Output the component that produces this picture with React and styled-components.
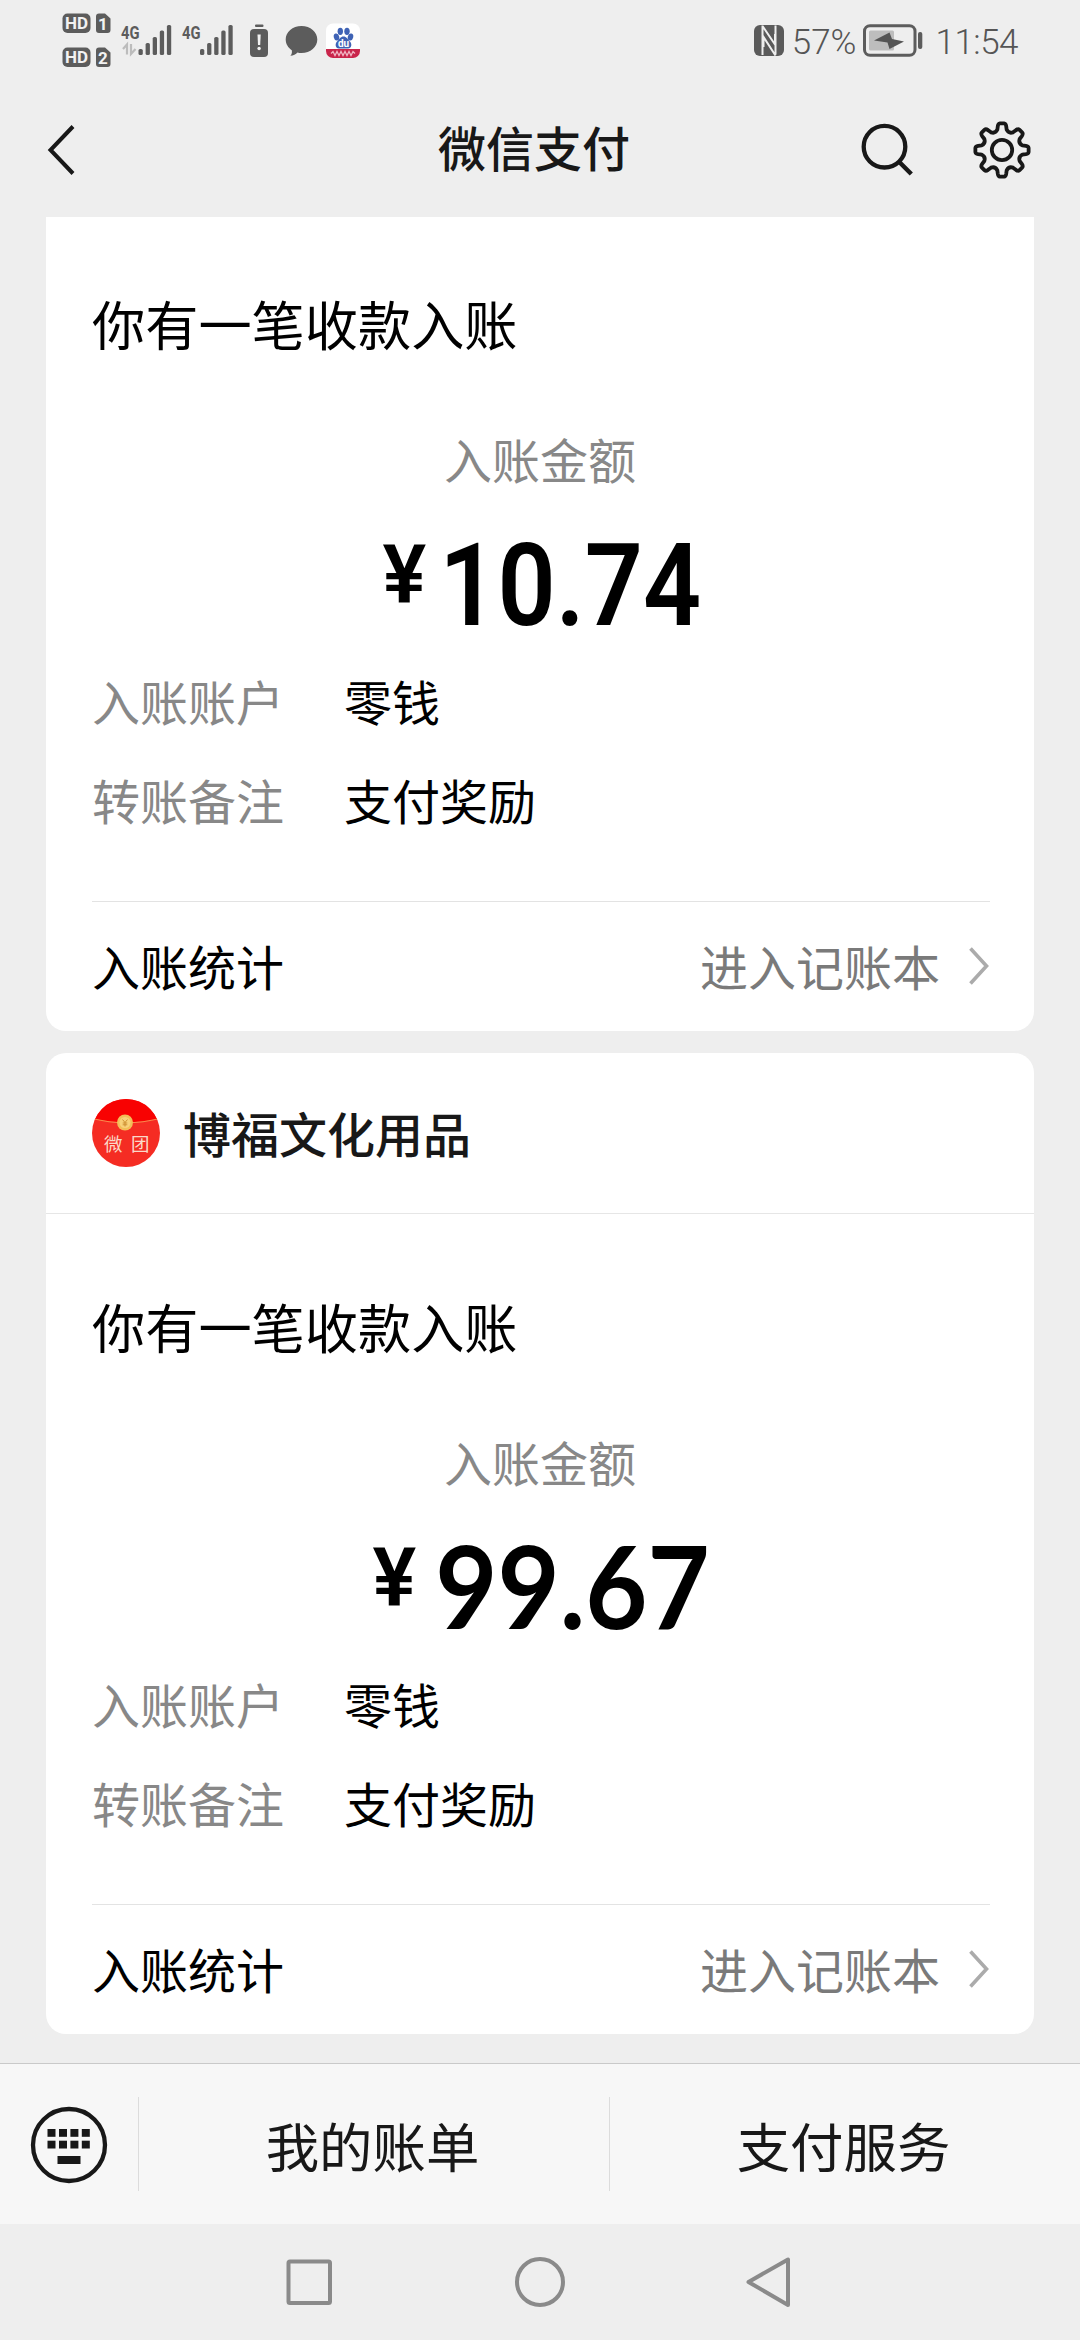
import React from "react";
import styled, { createGlobalStyle } from "styled-components";

const cjk = '"Noto Sans CJK SC", "Noto Sans", sans-serif';

const GlobalStyle = createGlobalStyle`
  * { box-sizing: border-box; }
  body { margin: 0; background: #eee; font-family: ${cjk}; }
  svg { display: block; flex: none; }
`;

const Screen = styled.div`
  width: 1080px;
  height: 2340px;
  display: flex;
  flex-direction: column;
  background: #eee;
  overflow: hidden;
`;

const StatusBar = styled.div`
  height: 90px;
  flex: none;
  display: flex;
  justify-content: space-between;
  align-items: flex-start;
  padding: 0 62px;
`;

const StatusRight = styled.div`
  display: flex;
  align-items: center;
  height: 81px;
`;

const StatusText = styled.span`
  font: 350 35px/40px Roboto, sans-serif;
  color: #555;
  letter-spacing: ${(p) => p.$spacing || 0}px;
  margin-left: ${(p) => p.$gap}px;
  padding-top: 5px;
`;

const BatteryIcon = styled.svg`
  margin-left: 7px;
`;

const TitleBar = styled.header`
  height: 127px;
  flex: none;
  display: grid;
  grid-template-columns: 220px 1fr 220px;
  align-items: center;
  padding: 0 0 7px;
`;

const BackButton = styled.div`
  padding-left: 46px;
`;

const Title = styled.h1`
  margin: 0 12px 0 0;
  text-align: center;
  font-size: 48px;
  line-height: 60px;
  font-weight: 500;
  color: #181818;
  padding-bottom: 8px;
`;

const Actions = styled.div`
  display: flex;
  gap: 55px;
  padding-left: 1px;
`;

const Feed = styled.main`
  flex: 1;
  min-height: 0;
  overflow: hidden;
  display: flex;
  flex-direction: column;
  justify-content: flex-end;
  gap: 22px;
  padding: 0 46px 29px;
`;

const Card = styled.section`
  flex: none;
  background: #fff;
  border-radius: ${(p) => (p.$continued ? "0 0 20px 20px" : "20px")};
`;

const Merchant = styled.div`
  height: 161px;
  display: flex;
  align-items: center;
  gap: 23px;
  padding-left: 46px;
  border-bottom: 1px solid #e6e6e6;
`;

const MerchantName = styled.div`
  font-size: 48px;
  line-height: 60px;
  font-weight: 500;
  color: #181818;
  padding-bottom: 2px;
`;

const Body = styled.div`
  height: 820px;
  display: flex;
  flex-direction: column;
  padding: 82px 44px 0 46px;
`;

const Notice = styled.div`
  font-size: 53.2px;
  line-height: 60px;
  color: #000;
`;

const Caption = styled.div`
  margin-top: 75px;
  font-size: 48px;
  line-height: 60px;
  text-align: center;
  color: #888;
  padding-right: 2px;
`;

const Amount = styled.div`
  height: 182px;
  display: flex;
  justify-content: center;
  align-items: flex-start;
  color: #000;
`;

const Currency = styled.span`
  font: 600 82px/80px Roboto, sans-serif;
  margin-top: 47px;
`;

const numerals = {
  roboto: { face: "Roboto", weight: 600, scale: 0.89, margin: "31px -18px 0 -3px" },
  lato: { face: "Lato", weight: 700, scale: 0.937, margin: "27px -10px 0 10px" },
};

const Figure = styled.span`
  font: ${(p) => p.$type.weight} 114.6px/134px ${(p) => p.$type.face}, sans-serif;
  transform: scaleX(${(p) => p.$type.scale});
  margin: ${(p) => p.$type.margin};
`;

const Details = styled.dl`
  margin: 0;
  display: grid;
  grid-template-columns: 252px 1fr;
  row-gap: 39px;
  font-size: 48px;
  line-height: 60px;
`;

const Term = styled.dt`
  color: #888;
`;

const Value = styled.dd`
  margin: 0;
  color: #000;
`;

const Footer = styled.div`
  margin-top: 72px;
  height: 130px;
  border-top: 1px solid #e3e3e3;
  display: flex;
  align-items: center;
  padding-bottom: 3px;
  font-size: 48px;
  line-height: 60px;
  color: #000;
`;

const FooterLink = styled.span`
  margin-left: auto;
  margin-right: 28px;
  color: #7a7a7a;
`;

const MenuBar = styled.nav`
  height: 161px;
  flex: none;
  display: grid;
  grid-template-columns: 138px 471px 1fr;
  align-items: center;
  background: #f7f7f7;
  border-top: 1.5px solid #c9c9c9;
`;

const KeyboardButton = styled.div`
  padding: 2px 0 0 30px;
`;

const MenuItem = styled.div`
  height: 94px;
  display: flex;
  align-items: center;
  justify-content: center;
  border-left: 1px solid #dcdcdc;
  font-size: 53.4px;
  line-height: 60px;
  padding: 2px 3px 0 0;
  color: #181818;
`;

const SystemNav = styled.div`
  height: 116px;
  flex: none;
  display: flex;
  justify-content: center;
  align-items: center;
  gap: 178px;
`;

function SignalBars({ x, y = 0 }) {
  const tops = [49, 43, 37, 30.5, 25];
  return tops.map((t, i) => (
    <rect key={t} x={x + i * 7.1} y={t + y} width="4.3" height={55 - t} rx="1.6" />
  ));
}

function StatusIcons() {
  return (
    <svg width="310" height="81" viewBox="62 0 310 81" fill="#5c5c5c">
      <rect x="62.5" y="13.5" width="28" height="19.5" rx="5" />
      <path d="M99 13.500h6l5.500 5v11.500a3 3 0 0 1-3 3h-8.500a3 3 0 0 1-3-3v-13.500a3 3 0 0 1 3-3z" />
      <rect x="62.5" y="47.500" width="28" height="19.500" rx="5" />
      <path d="M99 47.500h6l5.500 5v11.500a3 3 0 0 1-3 3h-8.500a3 3 0 0 1-3-3v-13.500a3 3 0 0 1 3-3z" />
      <g fill="#f2f2f2" fontFamily="Roboto, sans-serif" fontWeight="700" textAnchor="middle">
        <text x="76.500" y="29.200" fontSize="17">HD</text>
        <text x="103" y="29.500" fontSize="17">1</text>
        <text x="76.500" y="63.200" fontSize="17">HD</text>
        <text x="103" y="63.500" fontSize="17">2</text>
      </g>
      <g fontFamily="Roboto, sans-serif" fontWeight="700" fontSize="18.500">
        <text x="121" y="38.500" textLength="18.500" lengthAdjust="spacingAndGlyphs">4G</text>
        <text x="182" y="38.500" textLength="18.500" lengthAdjust="spacingAndGlyphs">4G</text>
      </g>
      <g fill="none" stroke="#bcbcbc" strokeWidth="2.200">
        <path d="M123 49l4-4.500v10" />
        <path d="M131 44v10l4.500-5" />
      </g>
      <SignalBars x={138.500} />
      <SignalBars x={200} />
      <rect x="255" y="24.500" width="8.500" height="2.500" rx="1" />
      <rect x="250" y="29" width="18" height="28" rx="4" />
      <path d="M257.500 34.500h3.200l-.5 10.500h-2.200z" fill="#f2f2f2" />
      <circle cx="259.100" cy="48.500" r="1.700" fill="#f2f2f2" />
      <path d="M301.500 26c9 0 15.800 6 15.800 13.500S310.500 53 301.500 53c-1.500 0-2.700-.1-4-.5-1.700 1.800-4 3.300-7.200 3.300 1.500-1.500 1.900-3.300 1.500-5.600-3.700-2.500-6.100-6.300-6.100-10.700C285.700 32 292.500 26 301.500 26z" />
      <rect x="326" y="23.500" width="34" height="34.500" rx="7" fill="#fff" />
      <path d="M326 49h34v2a7 7 0 0 1-7 7h-20a7 7 0 0 1-7-7z" fill="#c9254b" />
      <g fill="#3f63b5">
        <ellipse cx="336.500" cy="37" rx="2.700" ry="3.600" transform="rotate(-15 336.500 37)" />
        <ellipse cx="340.300" cy="31.300" rx="2.700" ry="3.600" />
        <ellipse cx="347" cy="31.300" rx="2.700" ry="3.600" />
        <ellipse cx="350.500" cy="37" rx="2.700" ry="3.600" transform="rotate(15 350.500 37)" />
        <path d="M343.500 36.500c3 0 4 2.800 6 4.500 3 2.500 2.200 7.500-1.500 7.500h-9c-3.700 0-4.500-5-1.500-7.500 2-1.700 3-4.500 6-4.500z" />
      </g>
      <text x="343.500" y="46.500" fill="#fff" fontFamily="Roboto, sans-serif" fontWeight="700" fontSize="10" textAnchor="middle">du</text>
      <path d="M331 53.500l2-2 2 4 2-4 2 4 2-4 2 4 2-4 2 4 2-4 2 4 2-4 2 2" fill="none" stroke="#f0b6c4" strokeWidth="1.300" />
    </svg>
  );
}

function NfcIcon() {
  return (
    <svg width="30" height="31" viewBox="0 0 30 31">
      <rect width="30" height="31" rx="6" fill="#5a5a5a" />
      <path d="M8.500 0.500v29.500M8.500 1l12.500 18.500V9M21.500 30.500L9.500 12v10M21.500 0.500v29" fill="none" stroke="#eee" strokeWidth="2" />
    </svg>
  );
}

function Battery() {
  return (
    <BatteryIcon width="60" height="33" viewBox="0 0 60 33">
      <rect x="1.500" y="1.800" width="50.500" height="29.500" rx="5.500" fill="none" stroke="#5c5c5c" strokeWidth="3" />
      <rect x="6" y="6.500" width="25" height="20" rx="1.500" fill="#bdbdbd" />
      <path d="M11 16.500l15.500-8 2.500 6.500 12 2.500-14.500 7.500-2-6.500z" fill="#555" />
      <rect x="55" y="8" width="4.300" height="17" rx="2" fill="#5c5c5c" />
    </BatteryIcon>
  );
}

function gearPath() {
  const pt = (deg, r) => {
    const a = (deg * Math.PI) / 180;
    return `${(30 + r * Math.sin(a)).toFixed(2)} ${(30 - r * Math.cos(a)).toFixed(2)}`;
  };
  let d = "";
  for (let i = 0; i < 8; i += 1) {
    const t = i * 45;
    d += `${i ? "L" : "M"}${pt(t - 10, 24.2)}Q${pt(t - 8, 26.7)} ${pt(t - 4.5, 26.7)}L${pt(t + 4.5, 26.7)}`;
    d += `Q${pt(t + 8, 26.7)} ${pt(t + 10, 24.2)}L${pt(t + 13, 20.8)}Q${pt(t + 22.5, 17.6)} ${pt(t + 32, 20.8)}`;
  }
  return `${d}Z`;
}

function SearchIcon() {
  return (
    <svg width="56" height="60" viewBox="0 0 56 60" fill="none" stroke="#181818">
      <circle cx="23.500" cy="26.700" r="20.800" strokeWidth="4.300" />
      <path d="M38.300 42l12 12" strokeWidth="4.500" />
    </svg>
  );
}

function GearIcon() {
  return (
    <svg width="60" height="60" viewBox="0 0 60 60" fill="none" stroke="#181818" strokeWidth="3.800" strokeLinejoin="round">
      <path d={gearPath()} />
      <circle cx="30" cy="30" r="10.200" />
    </svg>
  );
}

function Avatar() {
  return (
    <svg width="68" height="68" viewBox="0 0 68 68">
      <defs>
        <clipPath id="avatar-disc">
          <circle cx="34" cy="34" r="34" />
        </clipPath>
      </defs>
      <g clipPath="url(#avatar-disc)">
        <rect width="68" height="68" fill="#f52c23" />
        <path d="M0 0h68v19.500Q34 27 0 19.500z" fill="#f80202" />
        <path d="M0 19.500Q34 28 68 19.500" fill="none" stroke="#f98a4c" strokeWidth="1.200" />
      </g>
      <circle cx="33" cy="23.500" r="8" fill="#f3bd58" />
      <circle cx="33" cy="23.500" r="5.500" fill="#f8d27a" />
      <path d="M30.500 20.500l2.500 3 2.500-3M33 23.500v4M30.700 24h4.600M30.700 25.800h4.600" stroke="#c98a2c" strokeWidth="0.900" fill="none" />
      <g fill="#fbd9c8" fontFamily="Noto Sans CJK SC, sans-serif" fontSize="18.500">
        <text x="12" y="51.500">微</text>
        <text x="39" y="51.500">团</text>
      </g>
    </svg>
  );
}

function KeyboardIcon() {
  const keys = [17.500, 29, 40.400, 51.800];
  return (
    <svg width="78" height="78" viewBox="0 0 78 78" fill="#181818">
      <circle cx="39" cy="39" r="36" fill="none" stroke="#181818" strokeWidth="4.300" />
      {[23, 34.700].map((y) => keys.map((x) => <rect key={`${x}-${y}`} x={x} y={y} width="8" height="7.800" />))}
      <rect x="27.500" y="50" width="23" height="8" />
    </svg>
  );
}

function PaymentCard({ merchant, amount, type }) {
  return (
    <Card $continued={!merchant}>
      {merchant && (
        <Merchant>
          <Avatar />
          <MerchantName>{merchant}</MerchantName>
        </Merchant>
      )}
      <Body>
        <Notice>你有一笔收款入账</Notice>
        <Caption>入账金额</Caption>
        <Amount>
          <Currency>¥</Currency>
          <Figure $type={type}>{amount}</Figure>
        </Amount>
        <Details>
          <Term>入账账户</Term>
          <Value>零钱</Value>
          <Term>转账备注</Term>
          <Value>支付奖励</Value>
        </Details>
        <Footer>
          入账统计
          <FooterLink>进入记账本</FooterLink>
          <svg width="22" height="40" viewBox="0 0 22 40" fill="none" stroke="#ababab" strokeWidth="3.600">
            <path d="M2.500 3.500L18.500 21 2.500 38.500" />
          </svg>
        </Footer>
      </Body>
    </Card>
  );
}

export default function App() {
  return (
    <Screen>
      <GlobalStyle />
      <StatusBar>
        <StatusIcons />
        <StatusRight>
          <NfcIcon />
          <StatusText $gap={8}>57%</StatusText>
          <Battery />
          <StatusText $gap={12} $spacing={-0.5}>11:54</StatusText>
        </StatusRight>
      </StatusBar>
      <TitleBar>
        <BackButton>
          <svg width="30" height="50" viewBox="0 0 30 50" fill="none" stroke="#181818" strokeWidth="4">
            <path d="M27 1.500L4.500 25l22.500 23.500" />
          </svg>
        </BackButton>
        <Title>微信支付</Title>
        <Actions>
          <SearchIcon />
          <GearIcon />
        </Actions>
      </TitleBar>
      <Feed>
        <PaymentCard amount="10.74" type={numerals.roboto} />
        <PaymentCard merchant="博福文化用品" amount="99.67" type={numerals.lato} />
      </Feed>
      <MenuBar>
        <KeyboardButton>
          <KeyboardIcon />
        </KeyboardButton>
        <MenuItem>我的账单</MenuItem>
        <MenuItem>支付服务</MenuItem>
      </MenuBar>
      <SystemNav>
        <svg width="52" height="52" viewBox="0 0 52 52" fill="none" stroke="#8a8a8a" strokeWidth="4">
          <rect x="4.500" y="5.500" width="41.500" height="41.500" rx="1.500" />
        </svg>
        <svg width="52" height="52" viewBox="0 0 52 52" fill="none" stroke="#8a8a8a" strokeWidth="4">
          <circle cx="26" cy="26" r="23" />
        </svg>
        <svg width="52" height="52" viewBox="0 0 52 52" fill="none" stroke="#8a8a8a" strokeWidth="4" strokeLinejoin="round">
          <path d="M44 3.500v45.500L4.500 26z" />
        </svg>
      </SystemNav>
    </Screen>
  );
}
